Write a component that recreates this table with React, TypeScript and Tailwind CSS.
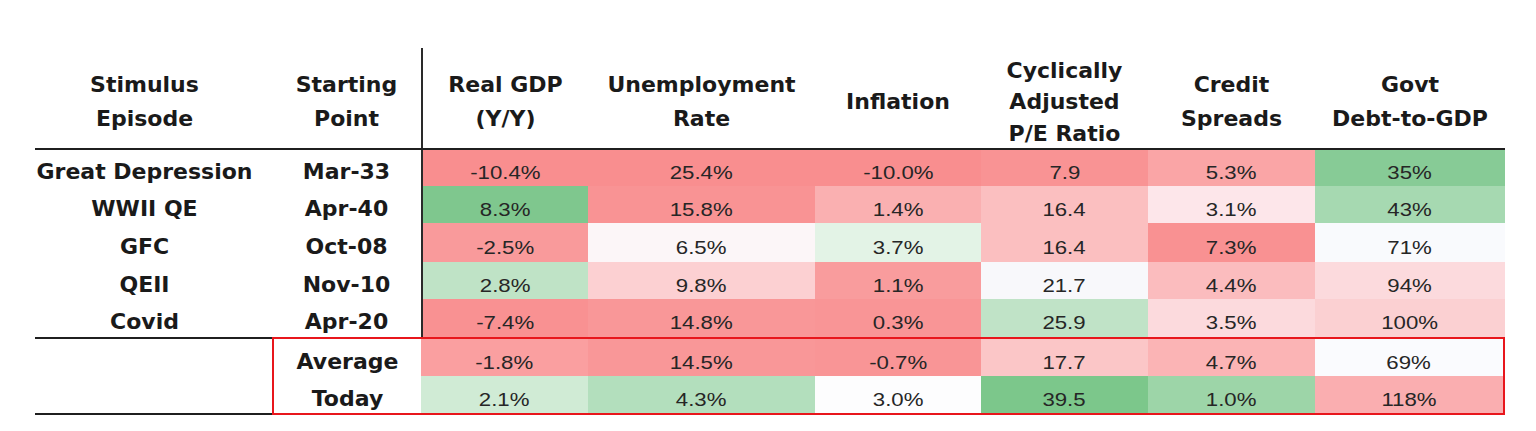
type Cell = [string, string];

type Row = {
  name: string;
  start: string;
  height: string;
  cells: Cell[];
};

const rows: Row[] = [
  {
    name: "Great Depression",
    start: "Mar-33",
    height: "h-[36px]",
    cells: [
      ["-10.4%", "#f98e8f"],
      ["25.4%", "#f98e8f"],
      ["-10.0%", "#f98e8f"],
      ["7.9", "#f99394"],
      ["5.3%", "#faa5a6"],
      ["35%", "#87cb96"],
    ],
  },
  {
    name: "WWII QE",
    start: "Apr-40",
    height: "h-[37px]",
    cells: [
      ["8.3%", "#7fc78e"],
      ["15.8%", "#f99394"],
      ["1.4%", "#fab0b1"],
      ["16.4", "#fbbfc0"],
      ["3.1%", "#fde6ea"],
      ["43%", "#a6d9b1"],
    ],
  },
  {
    name: "GFC",
    start: "Oct-08",
    height: "h-[39px]",
    cells: [
      ["-2.5%", "#f99a9b"],
      ["6.5%", "#fcf6f8"],
      ["3.7%", "#e3f3e6"],
      ["16.4", "#fbbfc0"],
      ["7.3%", "#f99192"],
      ["71%", "#f9fafd"],
    ],
  },
  {
    name: "QEII",
    start: "Nov-10",
    height: "h-[37px]",
    cells: [
      ["2.8%", "#bfe3c6"],
      ["9.8%", "#fcd0d2"],
      ["1.1%", "#f99c9d"],
      ["21.7", "#f8f8fb"],
      ["4.4%", "#fbbcbe"],
      ["94%", "#fcdadd"],
    ],
  },
  {
    name: "Covid",
    start: "Apr-20",
    height: "h-[38px]",
    cells: [
      ["-7.4%", "#f99192"],
      ["14.8%", "#f99798"],
      ["0.3%", "#f99596"],
      ["25.9", "#c0e3c7"],
      ["3.5%", "#fcdadd"],
      ["100%", "#fbd0d2"],
    ],
  },
];

const summary: { start: string; cells: Cell[] }[] = [
  {
    start: "Average",
    cells: [
      ["-1.8%", "#fa9fa0"],
      ["14.5%", "#f99798"],
      ["-0.7%", "#f99596"],
      ["17.7", "#fbc6c7"],
      ["4.7%", "#fbb4b5"],
      ["69%", "#fafbfe"],
    ],
  },
  {
    start: "Today",
    cells: [
      ["2.1%", "#d0ebd5"],
      ["4.3%", "#b3dfbd"],
      ["3.0%", "#fdfdfe"],
      ["39.5", "#7cc78b"],
      ["1.0%", "#9dd5a8"],
      ["118%", "#faaeb0"],
    ],
  },
];

// widths for the six data columns (upper block has the black rule on the first)
const dataWidths = ["w-[167px]", "w-[227px]", "w-[166px]", "w-[167px]", "w-[167px]", "w-[190px]"];
const boxWidths = ["w-[167px]", "w-[227px]", "w-[166px]", "w-[167px]", "w-[167px]", "w-[188px]"];

const heading = "font-['DejaVu_Sans',sans-serif] font-bold text-[22px] text-[#1a1a1a]";
const value = "font-['Liberation_Sans',Arial,sans-serif] text-[18.5px] text-[#262626]";

function ValueCell({ text, bg, width, rule }: { text: string; bg: string; width: string; rule?: boolean }) {
  return (
    <div
      className={`${width} h-full flex items-center justify-center pt-[11px] ${rule ? "border-l-2 border-[#2a2a2a]" : ""}`}
      style={{ backgroundColor: bg }}
    >
      <span className={`${value} inline-block scale-x-[1.2] leading-none`}>{text}</span>
    </div>
  );
}

function LabelCell({ text, width }: { text: string; width: string }) {
  return (
    <div className={`${width} h-full flex items-center justify-center pt-[8px]`}>
      <span className={`${heading} leading-none`}>{text}</span>
    </div>
  );
}

export default function App() {
  const headers = [
    { lines: ["Real GDP", "(Y/Y)"], width: "w-[167px]", rule: true },
    { lines: ["Unemployment", "Rate"], width: "w-[227px]" },
    { lines: ["Inflation"], width: "w-[166px]" },
    { lines: ["Cyclically", "Adjusted", "P/E Ratio"], width: "w-[167px]", tight: true },
    { lines: ["Credit", "Spreads"], width: "w-[167px]" },
    { lines: ["Govt", "Debt-to-GDP"], width: "w-[190px]" },
  ];

  return (
    <div className="min-h-[431px] bg-white pt-[48px] pl-[35px]">
      <div className="w-[1470px]">
        {/* header */}
        <div className="flex h-[102px] border-b-2 border-[#1f1f1f]">
          <div className={`w-[237px] flex items-center justify-center pt-[8px] pr-[18px] text-center leading-[34px] ${heading}`}>
            <div>
              Stimulus
              <br />
              Episode
            </div>
          </div>
          <div className={`w-[149px] flex items-center justify-center pt-[8px] text-center leading-[34px] ${heading}`}>
            <div>
              Starting
              <br />
              Point
            </div>
          </div>
          {headers.map((h) => (
            <div
              key={h.lines[0]}
              className={`${h.width} flex items-center justify-center pt-[8px] text-center ${h.tight ? "leading-[31.5px]" : "leading-[34px]"} ${heading} ${h.rule ? "border-l-2 border-[#2a2a2a]" : ""}`}
            >
              <div>
                {h.lines.map((l) => (
                  <div key={l}>{l}</div>
                ))}
              </div>
            </div>
          ))}
        </div>

        {/* episodes */}
        {rows.map((r) => (
          <div key={r.name} className={`flex ${r.height}`}>
            <LabelCell text={r.name} width="w-[237px] pr-[18px]" />
            <LabelCell text={r.start} width="w-[149px]" />
            {r.cells.map(([t, bg], i) => (
              <ValueCell key={i} text={t} bg={bg} width={dataWidths[i]} rule={i === 0} />
            ))}
          </div>
        ))}

        {/* average / today */}
        <div className="flex">
          <div className="w-[237px] h-[78px] border-y-2 border-[#1f1f1f]" />
          <div className="border-2 border-[#e8161c]">
            {summary.map((r) => (
              <div key={r.start} className="flex h-[37px]">
                <LabelCell text={r.start} width="w-[147px]" />
                {r.cells.map(([t, bg], i) => (
                  <ValueCell key={i} text={t} bg={bg} width={boxWidths[i]} />
                ))}
              </div>
            ))}
          </div>
        </div>
      </div>
    </div>
  );
}
